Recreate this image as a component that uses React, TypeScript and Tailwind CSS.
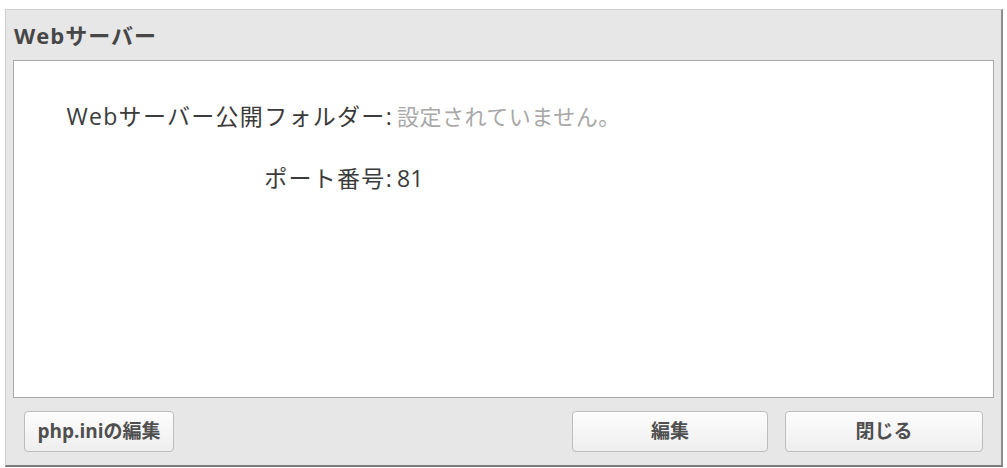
import React from 'react';

const font = { fontFamily: '"Open Sans", "Noto Sans CJK JP", sans-serif' };

type Row = { label: string; value: string; muted?: boolean };

const rows: Row[] = [
  { label: 'Webサーバー公開フォルダー:', value: '設定されていません。', muted: true },
  { label: 'ポート番号:', value: '81' },
];

const DialogButton = ({ label, className = '' }: { label: string; className?: string }) => (
  <button
    type="button"
    className={`h-[41px] rounded-[4px] border border-[#bdbdbd] bg-gradient-to-b from-[#fdfdfd] to-[#eeeeee] text-[19px] font-bold text-[#4f4f4f] shadow-[inset_0_1px_0_#ffffff] ${className}`}
  >
    {label}
  </button>
);

export default function App() {
  return (
    <div className="w-[1007px] h-[468px] bg-white pt-[9px] pl-[5px] pr-[4px] pb-[1px]" style={font}>
      <div className="flex h-full flex-col border-l border-t border-[#cfcfcf] border-r-2 border-b-2 border-r-[#8c8c8c] border-b-[#7a7a7a] bg-[#e7e7e7] px-[7px]">
        <div className="flex h-[50px] items-center pl-[1px] text-[22px] font-bold tracking-[1px] text-[#474747]">
          Webサーバー
        </div>

        <div className="h-[338px] border border-[#a9a9a9] bg-white pt-[40px]">
          <div className="grid grid-cols-[379px_1fr] gap-x-[4px] gap-y-[32px] text-[23px] leading-[30px]">
            {rows.map((row) => (
              <React.Fragment key={row.label}>
                <div className="text-right tracking-[1.3px] text-[#3b3b3b]">{row.label}</div>
                <div className={row.muted ? 'text-[22px] tracking-[0.5px] text-[#a8a8a8]' : 'text-[#3b3b3b]'}>
                  {row.value}
                </div>
              </React.Fragment>
            ))}
          </div>
        </div>

        <div className="mt-[13px] flex items-center">
          <DialogButton label="php.iniの編集" className="ml-[11px] w-[150px]" />
          <DialogButton label="編集" className="ml-auto w-[196px]" />
          <DialogButton label="閉じる" className="ml-[17px] mr-[11px] w-[198px]" />
        </div>
      </div>
    </div>
  );
}
